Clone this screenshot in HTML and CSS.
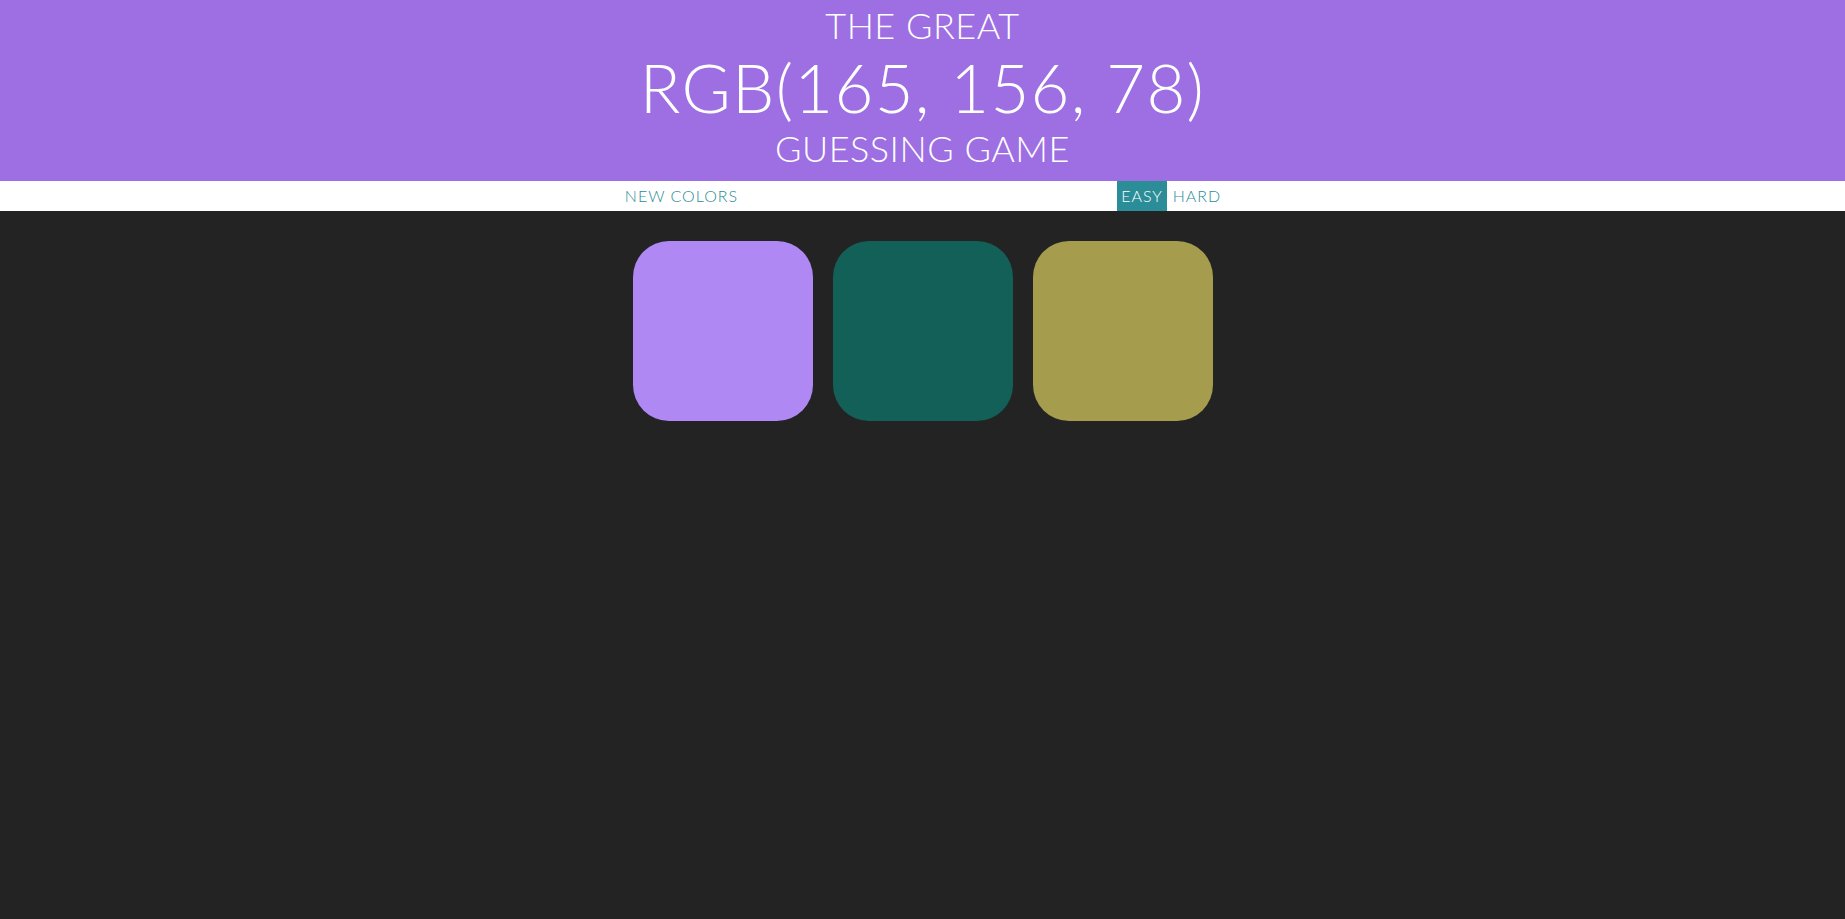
FILE: index.html
```html
<!DOCTYPE html>
<html lang="en">
<head>
<meta charset="utf-8">
<title>Color Game</title>
<link rel="stylesheet" href="styles.css">
</head>
<body>
<header class="title">
  <div class="title-small line-top">THE GREAT</div>
  <div class="title-big">RGB(165, 156, 78)</div>
  <div class="title-small line-bottom">GUESSING GAME</div>
</header>
<nav class="stripe">
  <button class="btn btn-new">NEW COLORS</button>
  <span class="message"></span>
  <button class="btn btn-mode selected">EASY</button>
  <button class="btn btn-mode btn-hard">HARD</button>
</nav>
<main class="board">
  <div class="square sq-purple"></div>
  <div class="square sq-teal"></div>
  <div class="square sq-olive"></div>
</main>
</body>
</html>
```
FILE: styles.css
```css
html, body {
  margin: 0;
  padding: 0;
}
body {
  background: #232323;
  font-family: Lato, "Open Sans", sans-serif;
  min-height: 100vh;
}
.title {
  background: #9d6fe3;
  color: #ffffff;
  text-align: center;
  height: 181px;
  box-sizing: border-box;
  font-weight: 300;
}
.title-small {
  font-size: 36px;
  letter-spacing: 0.5px;
}
.line-top {
  line-height: 50px;
}
.title-big {
  font-size: 67px;
  line-height: 74px;
  letter-spacing: 1.3px;
}
.line-bottom {
  line-height: 48px;
}
.stripe {
  background: #ffffff;
  height: 30px;
  display: flex;
  justify-content: center;
  gap: 3px;
}
.btn {
  border: none;
  background: none;
  margin: 0;
  padding: 0 0 2px;
  height: 30px;
  font-family: Lato, "Open Sans", sans-serif;
  font-size: 16px;
  font-weight: 300;
  letter-spacing: 1px;
  color: #2b8d98;
  text-transform: uppercase;
  cursor: pointer;
}
.btn-new {
  width: 121px;
}
.btn-mode {
  width: 50px;
}
.btn-hard {
  width: 54px;
}
.selected {
  background: #2b8d98;
  color: #ffffff;
}
.message {
  width: 20%;
}
.board {
  width: 600px;
  margin: 20px auto;
  display: flex;
  flex-wrap: wrap;
}
.square {
  width: 180px;
  height: 180px;
  margin: 10px;
  border-radius: 36px;
}
.sq-purple {
  background: #af88f4;
}
.sq-teal {
  background: #136058;
}
.sq-olive {
  background: #a59c4e;
}
```
